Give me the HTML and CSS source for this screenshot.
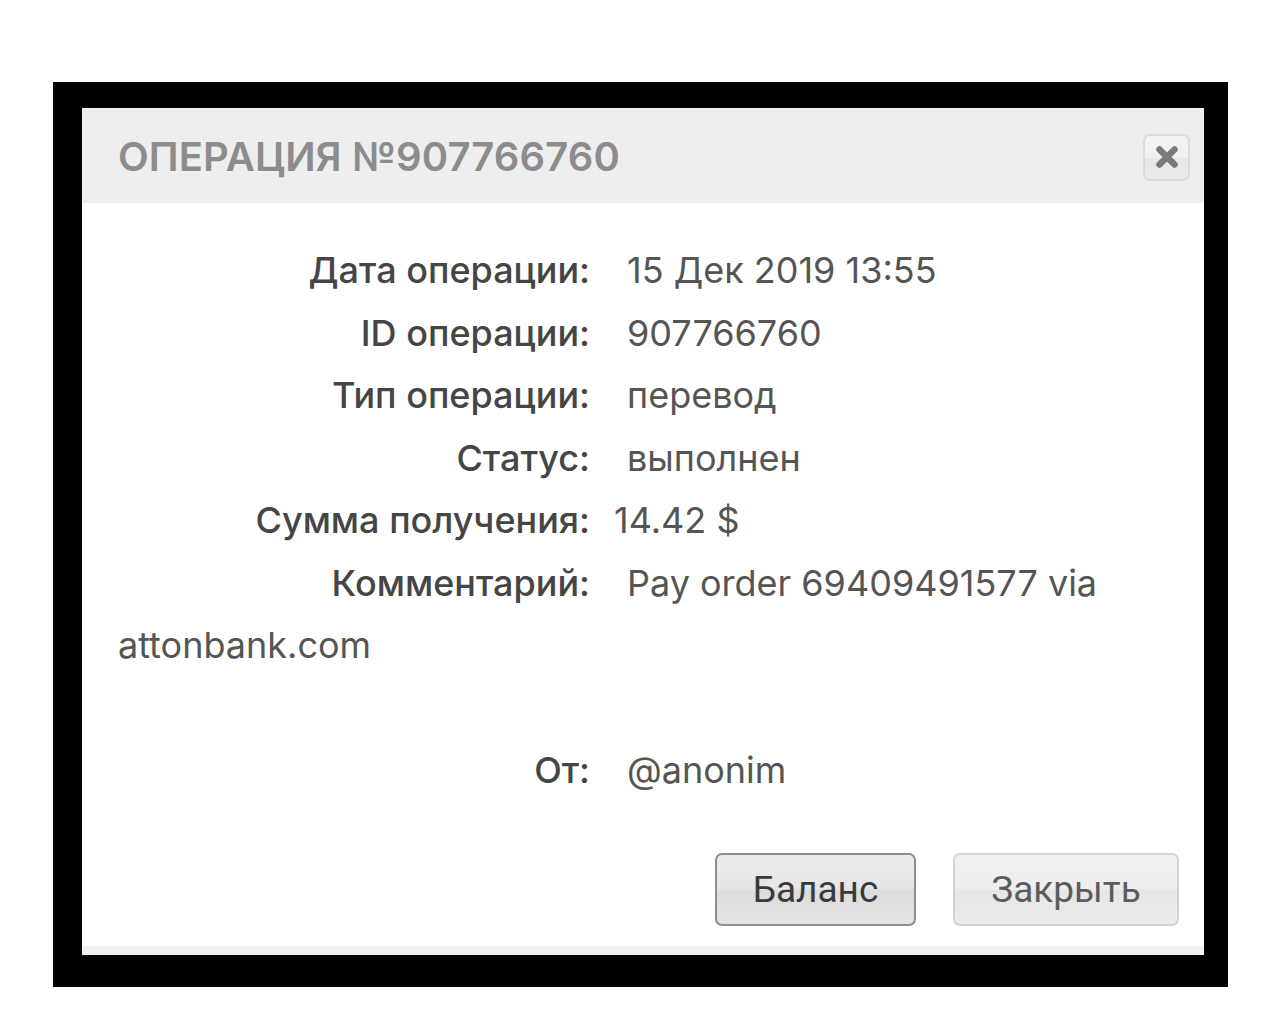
FILE: index.html
```html
<!DOCTYPE html>
<html lang="ru">
<head>
<meta charset="utf-8">
<title>Операция №907766760</title>
<link rel="stylesheet" href="styles.css">
</head>
<body>
<div class="frame">
  <div class="dialog">
    <div class="dialog-head">
      <h1 class="dialog-title">ОПЕРАЦИЯ №907766760</h1>
      <button class="close-btn" type="button" aria-label="Закрыть">
        <svg width="24" height="24" viewBox="0 0 24 24" aria-hidden="true"><path d="M4.5 4.5 L19.5 19.5 M19.5 4.5 L4.5 19.5" stroke="#7a7a7a" stroke-width="6.5" stroke-linecap="round"/></svg>
      </button>
    </div>
    <div class="dialog-body">
      <div class="info">
        <span class="lbl">Дата операции:</span><span class="val">15 Дек 2019 13:55</span><br>
        <span class="lbl">ID операции:</span><span class="val">907766760</span><br>
        <span class="lbl">Тип операции:</span><span class="val">перевод</span><br>
        <span class="lbl">Статус:</span><span class="val">выполнен</span><br>
        <span class="lbl">Сумма получения:</span><span class="val val-sum">14.42 $</span><br>
        <span class="lbl">Комментарий:</span><span class="val">Pay order 69409491577 via<br>attonbank.com</span><br>
        <br>
        <span class="lbl">От:</span><span class="val">@anonim</span>
      </div>
      <div class="actions">
        <button class="btn btn-primary" type="button">Баланс</button>
        <button class="btn btn-secondary" type="button">Закрыть</button>
      </div>
    </div>
  </div>
</div>
</body>
</html>
```
FILE: styles.css
```css
html, body {
  margin: 0;
  padding: 0;
  background: #ffffff;
}

body {
  padding: 82px 0 0 53px;
  font-family: "Inter", "Noto Sans", sans-serif;
}

.frame {
  width: 1175px;
  height: 905px;
  box-sizing: border-box;
  background: #000000;
  padding: 26px 24px 32px 29px;
}

.dialog {
  height: 100%;
  box-sizing: border-box;
  background: #ffffff;
  border-bottom: 9px solid #f2f2f2;
  display: flex;
  flex-direction: column;
}

.dialog-head {
  height: 95px;
  flex: 0 0 auto;
  background: #eeeeee;
  border-top: 1px solid #f6f6f6;
  box-sizing: border-box;
  display: flex;
  align-items: center;
  justify-content: space-between;
  padding: 0 14px 0 36px;
}

.dialog-title {
  margin: 0;
  font-family: "Inter", sans-serif;
  font-weight: 600;
  font-size: 40px;
  letter-spacing: 0.1px;
  color: #8c8c8c;
  line-height: 1;
  padding-top: 2px;
}

.close-btn {
  width: 47px;
  height: 47px;
  margin: 2px 0 0 0;
  padding: 0;
  border: 2px solid #dcdcdc;
  border-radius: 7px;
  background: linear-gradient(#f4f4f4 0%, #f1f1f1 50%, #e7e7e7 50%, #ececec 100%);
  display: flex;
  align-items: center;
  justify-content: center;
  box-sizing: border-box;
}

.dialog-body {
  flex: 1 1 auto;
  padding: 36px 25px 0 36px;
  display: flex;
  flex-direction: column;
}

.info {
  font-size: 36px;
  line-height: 62.5px;
  color: #4c4c4c;
}

.lbl {
  display: inline-block;
  width: 472px;
  text-align: right;
  font-weight: 500;
  color: #454545;
}

.val {
  margin-left: 37px;
  font-weight: 400;
  color: #555555;
}

.val-sum {
  margin-left: 24px;
}

.actions {
  display: flex;
  justify-content: flex-end;
  gap: 37px;
  margin-top: 51px;
}

.btn {
  height: 73px;
  box-sizing: border-box;
  border-radius: 7px;
  font-family: "Roboto", "Noto Sans", sans-serif;
  font-size: 37px;
  padding: 0;
  margin: 0;
}

.btn-primary {
  width: 201px;
  border: 2px solid #8e8e8e;
  background: linear-gradient(#ececec 0%, #e6e6e6 48%, #dcdcdc 52%, #e4e4e4 100%);
  color: #3a3a3a;
}

.btn-secondary {
  width: 226px;
  border: 2px solid #d4d4d4;
  background: linear-gradient(#f1f1f1 0%, #eeeeee 48%, #e6e6e6 52%, #ececec 100%);
  color: #5c5c5c;
}
```
